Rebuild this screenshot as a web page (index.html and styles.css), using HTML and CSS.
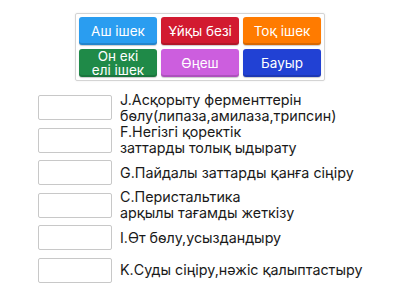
FILE: index.html
```html
<!DOCTYPE html>
<html>
<head>
<meta charset="utf-8">
<link rel="stylesheet" href="styles.css">
</head>
<body>
<div class="bank">
  <div class="tile t-blue">Аш ішек</div>
  <div class="tile t-red">Ұйқы безі</div>
  <div class="tile t-orange">Тоқ ішек</div>
  <div class="tile t-green">Он екі<br>елі ішек</div>
  <div class="tile t-purple">Өңеш</div>
  <div class="tile t-navy">Бауыр</div>
</div>
<div class="list">
  <div class="row"><div class="slot"></div><div class="label">J.Асқорыту ферменттерін<br>бөлу(липаза,амилаза,трипсин)</div></div>
  <div class="row"><div class="slot"></div><div class="label">F.Негізгі қоректік<br>заттарды толық ыдырату</div></div>
  <div class="row"><div class="slot"></div><div class="label">G.Пайдалы заттарды қанға сіңіру</div></div>
  <div class="row"><div class="slot"></div><div class="label">C.Перистальтика<br>арқылы тағамды жеткізу</div></div>
  <div class="row"><div class="slot"></div><div class="label">I.Өт бөлу,усыздандыру</div></div>
  <div class="row"><div class="slot"></div><div class="label">K.Суды сіңіру,нәжіс қалыптастыру</div></div>
</div>
</body>
</html>
```
FILE: styles.css
```css
html, body {
  margin: 0;
  padding: 0;
  background: #fff;
}
body {
  width: 400px;
  height: 300px;
  overflow: hidden;
  font-family: Inter, "Liberation Sans", Arial, sans-serif;
}
.bank {
  box-sizing: border-box;
  width: 250px;
  margin: 13px auto 0;
  padding: 3px;
  border: 1px solid #d4d4d4;
  border-radius: 2px;
  display: grid;
  grid-template-columns: repeat(3, 78px);
  grid-auto-rows: 28px;
  gap: 4px;
  box-shadow: 0 0 2px rgba(0,0,0,0.08);
}
.tile {
  border-radius: 3px;
  color: #fff;
  font-size: 13.5px;
  line-height: 14px;
  display: flex;
  align-items: center;
  justify-content: center;
  text-align: center;
  box-shadow: inset 0 -2px 0 rgba(0,0,0,0.15), 0 1px 1px rgba(0,0,0,0.2);
}
.t-blue { background: #2a9df0; }
.t-red { background: #d21a30; }
.t-orange { background: #ff7b00; }
.t-green { background: #1f8a48; }
.t-purple { background: #cc5ede; }
.t-navy { background: #2141d4; }
.list {
  margin: 14px 0 0 38px;
  display: flex;
  flex-direction: column;
  gap: 7.5px;
}
.row {
  display: flex;
  align-items: center;
  height: 25px;
  gap: 8px;
}
.slot {
  box-sizing: border-box;
  width: 74px;
  height: 25px;
  flex: none;
  border: 1px solid #c8c8c8;
  border-radius: 2px;
  background: #fff;
}
.label {
  font-size: 14.3px;
  line-height: 16px;
  color: #1a1a1a;
  white-space: nowrap;
}
```
